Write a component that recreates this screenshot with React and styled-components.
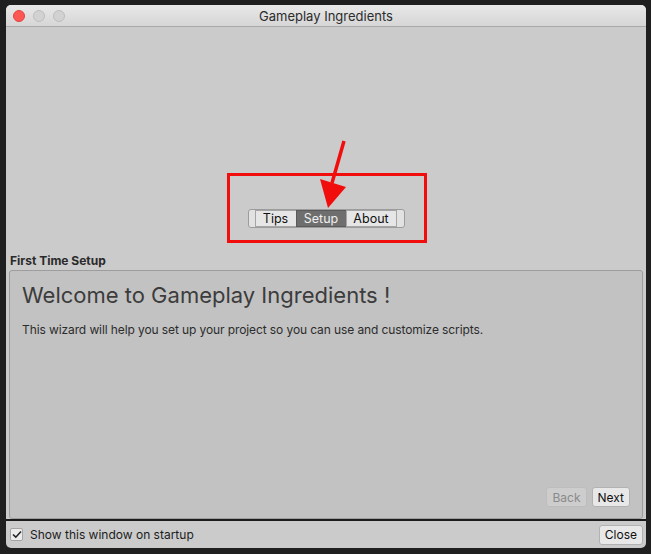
import React from 'react';
import styled, { createGlobalStyle } from 'styled-components';

const Global = createGlobalStyle`
  html, body {
    margin: 0;
    padding: 0;
    background: #1f1f1f;
    width: 651px;
    height: 554px;
    overflow: hidden;
    font-family: Inter, "Noto Sans", "Liberation Sans", sans-serif;
  }
`;

const Window = styled.div`
  position: relative;
  margin: 5px 0 0 6px;
  width: 640px;
  height: 543px;
  background: #cbcbcb;
  border-radius: 5px;
  overflow: hidden;
  display: flex;
  flex-direction: column;
`;

const TitleBar = styled.div`
  height: 21px;
  flex: none;
  display: flex;
  align-items: center;
  justify-content: center;
  position: relative;
  background: linear-gradient(#e8e8e8, #d6d6d6);
  border-bottom: 1px solid #a9a9a9;
  font-size: 13px;
  color: #2c2c2c;
`;

const Lights = styled.div`
  position: absolute;
  left: 7px;
  top: 5px;
  display: flex;
  gap: 8px;
`;

const Light = styled.span`
  width: 12px;
  height: 12px;
  border-radius: 50%;
  box-sizing: border-box;
  background: ${p => (p.red ? '#fc5753' : '#d2d2d2')};
  border: 1px solid ${p => (p.red ? '#e0443e' : '#bdbdbd')};
`;

const TopArea = styled.div`
  height: 224px;
  flex: none;
  display: flex;
  align-items: flex-end;
  justify-content: center;
  padding-bottom: 23px;
  box-sizing: border-box;
`;

const TabRail = styled.div`
  display: flex;
  align-items: center;
  height: 19px;
  padding: 0 7px;
  background: #e2e2e2;
  border: 1px solid #9c9c9c;
  border-radius: 3px;
  box-sizing: border-box;
`;

const Tab = styled.div`
  height: 17px;
  display: flex;
  align-items: center;
  justify-content: center;
  width: ${p => p.w}px;
  font-size: 12.5px;
  color: ${p => (p.active ? '#f0f0f0' : '#111')};
  background: ${p => (p.active ? '#6e6e6e' : '#e6e6e6')};
  border: 1px solid ${p => (p.active ? '#5a5a5a' : '#a5a5a5')};
  box-sizing: border-box;
  margin-left: -1px;
`;

const SectionLabel = styled.div`
  height: 18px;
  padding-left: 4px;
  font-size: 12px;
  font-weight: 700;
  color: #2a2a2a;
  display: flex;
  align-items: center;
`;

const Panel = styled.div`
  margin: 1px 3px 0 3px;
  height: 249px;
  box-sizing: border-box;
  background: #c2c2c2;
  border: 1px solid #9d9d9d;
  border-radius: 3px;
  padding: 9px 12px 10px 12px;
  display: flex;
  flex-direction: column;
`;

const Heading = styled.div`
  font-size: 22px;
  color: #3c3c3c;
  line-height: 30px;
`;

const Para = styled.div`
  margin-top: 12px;
  font-size: 12px;
  letter-spacing: -0.1px;
  color: #2c2c2c;
`;

const Actions = styled.div`
  margin-top: auto;
  margin-bottom: 1px;
  display: flex;
  justify-content: flex-end;
  gap: 5px;
`;

const Button = styled.div`
  height: 20px;
  padding: 0 5px;
  display: flex;
  align-items: center;
  font-size: 12px;
  border-radius: 3px;
  box-sizing: border-box;
  color: ${p => (p.disabled ? '#8a8a8a' : '#111')};
  background: ${p => (p.disabled ? '#cdcdcd' : '#e8e8e8')};
  border: 1px solid ${p => (p.disabled ? '#bdbdbd' : '#b2b2b2')};
`;

const Footer = styled.div`
  margin-top: auto;
  height: 27px;
  border-top: 2px solid #1c1c1c;
  display: flex;
  align-items: center;
  padding: 0 3px 0 4px;
  gap: 7px;
  font-size: 12px;
  color: #1c1c1c;
`;

const Check = styled.span`
  width: 13px;
  height: 13px;
  box-sizing: border-box;
  background: #ececec;
  border: 1px solid #a4a4a4;
  border-radius: 2px;
  display: flex;
  align-items: center;
  justify-content: center;
`;

const Spacer = styled.div`
  flex: 1;
`;

const Highlight = styled.div`
  position: absolute;
  left: 221px;
  top: 168px;
  width: 200px;
  height: 70px;
  border: 3px solid #f20d0d;
  box-sizing: border-box;
  pointer-events: none;
`;

const Arrow = styled.svg`
  position: absolute;
  left: 0;
  top: 0;
  pointer-events: none;
`;

export default function App() {
  return (
    <>
      <Global />
      <Window>
        <TitleBar>
          <Lights>
            <Light red />
            <Light />
            <Light />
          </Lights>
          Gameplay Ingredients
        </TitleBar>
        <TopArea>
          <TabRail>
            <Tab w={42}>Tips</Tab>
            <Tab w={51} active>Setup</Tab>
            <Tab w={51}>About</Tab>
          </TabRail>
        </TopArea>
        <SectionLabel>First Time Setup</SectionLabel>
        <Panel>
          <Heading>Welcome to Gameplay Ingredients !</Heading>
          <Para>This wizard will help you set up your project so you can use and customize scripts.</Para>
          <Actions>
            <Button disabled>Back</Button>
            <Button>Next</Button>
          </Actions>
        </Panel>
        <Footer>
          <Check>
            <svg width="10" height="9" viewBox="0 0 10 9">
              <path d="M1 4.5 L3.8 7.2 L9 1.5" fill="none" stroke="#222" strokeWidth="1.6" />
            </svg>
          </Check>
          Show this window on startup
          <Spacer />
          <Button>Close</Button>
        </Footer>
        <Highlight />
        <Arrow width="640" height="543" viewBox="0 0 640 543">
          <line x1="338" y1="136" x2="326" y2="178" stroke="#f20d0d" strokeWidth="3.5" />
          <polygon points="314,174 340,182 322,203" fill="#f20d0d" />
        </Arrow>
      </Window>
    </>
  );
}
